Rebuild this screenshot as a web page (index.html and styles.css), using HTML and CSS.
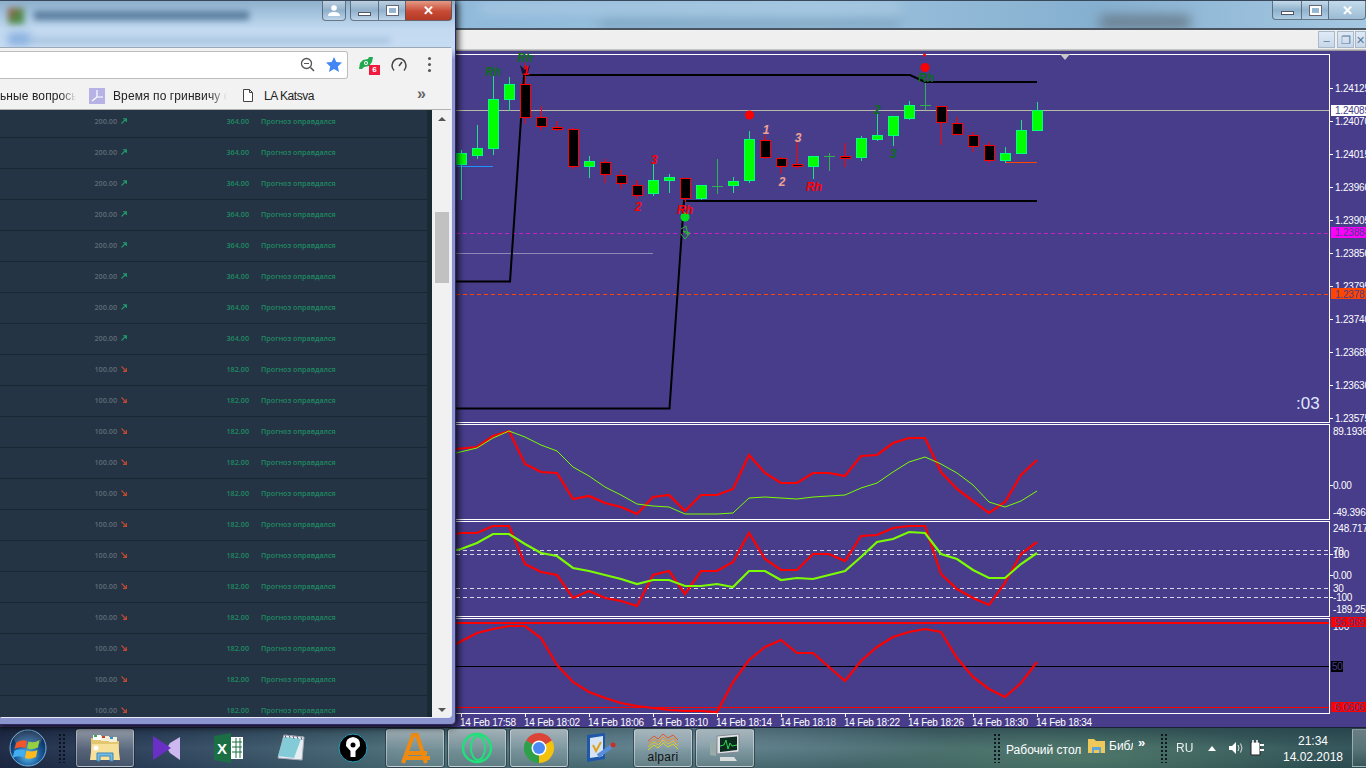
FILE: index.html
```html
<!DOCTYPE html>
<html lang="ru">
<head>
<meta charset="utf-8">
<title>Desktop</title>
<link rel="stylesheet" href="styles.css">
</head>
<body>
<svg class="defs" width="0" height="0">
  <symbol id="up" viewBox="0 0 6 6"><path d="M.5 5.5 5 1M2 .7h3.400v3.400" fill="none" stroke="currentColor" stroke-width="1.100"/></symbol>
  <symbol id="down" viewBox="0 0 6 6"><path d="M.5.5 5 5M5.400 2v3.400H2" fill="none" stroke="currentColor" stroke-width="1.100"/></symbol>
</svg>
<div class="desktop">
  <main class="mt-window">
    <header class="mt-title">
      <div class="blot blot-a"></div><div class="blot blot-b"></div><div class="blot blot-g"></div>
      <div class="caption-set caption-back">
        <span class="cap cap-min"><i></i></span><span class="cap cap-max"><i></i></span>
        <span class="cap cap-x">✕</span>
      </div>
    </header>
    <div class="mt-toolbar">
      <span class="mdi">–</span><span class="mdi">❐</span><span class="mdi">✕</span>
    </div>
    <svg class="chart" viewBox="0 53 1366 674" width="1366" height="674">
      <!-- frames -->
      <path class="frame" d="M0 54.500H1329.500V422.500H0M0 424.500H1329.500V519.500H0M0 521.500H1329.500V616.500H0M0 618.500H1329.500V713.500H0"/>
      <path class="frame" d="M1329.500 88.500h3M1329.500 121.500h3M1329.500 154.500h3M1329.500 187.500h3M1329.500 220.500h3M1329.500 253.500h3M1329.500 286.500h3M1329.500 319.500h3M1329.500 352.500h3M1329.500 385.500h3M1329.500 418.500h3M1329.500 485.500h3M1329.500 554.500h3M1329.500 575.500h3M1329.500 597.500h3M461.500 713v4M525.500 713v4M589.500 713v4M653.500 713v4M717.500 713v4M781.500 713v4M845.500 713v4M909.500 713v4M973.500 713v4M1037.500 713v4"/>
      <polygon class="tri" points="1060,54 1070,54 1065,60"/>
      <!-- price lines -->
      <path class="l-bid" d="M456 110.500H1329"/>
      <path class="l-mag" d="M456 233.500H1329"/>
      <path class="l-org" d="M456 294.500H1329"/>
      <path class="l-blue" d="M456 166.500H493"/>
      <path class="l-lil" d="M456 253.500H653"/>
      <path class="l-org2" d="M1006 162.500H1037"/>
      <path class="l-stair" d="M456 281.500H510L524 75H910L925 82H1037"/>
      <path class="l-stair" d="M456 408.500H669.500L684 201H1037"/>
      <!-- candles -->
      <path class="w-bull" d="M461.500 150V200M477.500 125V159M493.500 76V155M509.500 77V111M589.500 156V178M653.500 164V196M669.500 174V193M701.500 198V200M733.500 177V193M749.500 131V183M813.500 166V179M861.500 136V161M877.500 113V141M893.500 135V146M909.500 101V120M1005.500 147V163M1021.500 120V154M1037.500 102V131"/>
      <path class="w-doji" d="M717.500 159V194M712 186.500H723M829.500 153V171M824 156.500H835M925.500 83V110M920 105.500H931"/>
      <path class="w-bear" d="M525.500 63V124M541.500 106V130M557.500 121V131M573.500 128V169M605.500 159V183M621.500 170V189M637.500 180V199M685.500 178V202M765.500 135V159M781.500 157V174M797.500 142V169M845.500 143V167M941.500 106V145M957.500 117V135M973.500 132V152M989.500 142V163"/>
      <path class="b-bull" d="M456.500 153.500h10v11h-10zM472.500 148.500h10v7h-10zM488.500 99.500h10v49h-10zM504.500 84.500h10v15h-10zM584.500 161.500h10v5h-10zM648.500 180.500h10v13h-10zM664.500 177.500h10v3h-10zM696.500 185.500h10v13h-10zM728.500 181.500h10v4h-10zM744.500 139.500h10v41h-10zM808.500 156.500h10v10h-10zM856.500 138.500h10v19h-10zM872.500 135.500h10v4h-10zM888.500 116.500h10v19h-10zM904.500 105.500h10v13h-10zM1000.500 153.500h10v7h-10zM1016.500 130.500h10v23h-10zM1032.500 110.500h10v20h-10z"/>
      <path class="b-bear" d="M520.500 84.500h10v33h-10zM536.500 117.500h10v9h-10zM552.500 127.500h10v2h-10zM568.500 129.500h10v37h-10zM600.500 162.500h10v12h-10zM616.500 175.500h10v8h-10zM632.500 185.500h10v10h-10zM680.500 178.500h10v20h-10zM760.500 140.500h10v17h-10zM776.500 158.500h10v8h-10zM792.500 164.500h10v2h-10zM840.500 156.500h10v2h-10zM936.500 106.500h10v16h-10zM952.500 123.500h10v11h-10zM968.500 135.500h10v11h-10zM984.500 145.500h10v15h-10z"/>
      <!-- markers -->
      <text class="mk g" x="525" y="62">Rh</text>
      <path class="arrow-mark" d="M520 65 525 70 530 65 528 73 525 76 522 73Z"/>
      <circle class="dot-r" cx="749.500" cy="115" r="4.500"/>
      <circle class="dot-r" cx="925" cy="67.500" r="4.500"/>
      <circle class="dot-r small" cx="924.500" cy="55" r="1.500"/>
      <circle class="dot-g" cx="685" cy="217" r="4.500"/>
      <path class="scribble" d="M681 229 686 226 688 235 683 231 690 233 685 239 681 234"/>
      <text class="mk g" x="493" y="76">Rh</text>
      <text class="mk r" x="526" y="75">1</text>
      <text class="mk r" x="638" y="211">2</text>
      <text class="mk r" x="654" y="164">3</text>
      <text class="mk r" x="685" y="214">Rh</text>
      <text class="mk p" x="766" y="134">1</text>
      <text class="mk p" x="782" y="186">2</text>
      <text class="mk p" x="798" y="142">3</text>
      <text class="mk r" x="814" y="191">Rh</text>
      <text class="mk g" x="877" y="114">2</text>
      <text class="mk g" x="893" y="158">3</text>
      <text class="mk g" x="926" y="82">Rh</text>
      <text class="timer" x="1296" y="409">:03</text>
      <!-- indicators -->
      <polyline class="ln-r" points="456,449 477,447 493,436 509,431 525,464 541,472 557,473 573,499 589,496 605,503 621,507 637,514 653,497 669,495 685,511 701,495 717,495 733,489 749,455 765,473 781,483 797,483 813,473 829,473 845,476 861,456 877,455 893,443 909,438 925,438 941,472 957,489 973,501 989,513 1005,502 1021,475 1037,460"/>
      <polyline class="ln-g1" points="456,453 477,448 493,438 509,431 525,437 541,445 557,451 573,467 589,476 605,487 621,495 637,504 653,506 669,507 685,514 701,514 717,514 733,513 749,498 765,497 781,498 797,499 813,497 829,496 845,495 861,488 877,483 893,472 909,462 925,457 941,464 957,473 973,485 989,502 1005,507 1021,501 1037,491"/>
      <path class="l-dash" d="M456 550.500H1329M456 554.500H1329M456 588.500H1329M456 597.500H1329"/>
      <polyline class="ln-r" points="456,534 461,533 477,533 493,526 509,526 525,564 541,572 557,575 573,598 589,591 605,598 621,601 637,606 653,575 669,571 685,594 701,571 717,571 733,562 749,533 765,559 781,570 797,570 813,554 829,554 845,561 861,536 877,535 893,528 909,526 925,526 941,574 957,589 973,598 989,605 1005,583 1021,554 1037,542"/>
      <polyline class="ln-g2" points="456,550 461,549 477,543 493,534 509,534 525,544 541,553 557,556 573,568 589,571 605,575 621,579 637,584 653,580 669,580 685,586 701,586 717,584 733,587 749,571 765,571 781,580 797,578 813,579 829,575 845,571 861,557 877,542 893,539 909,532 925,533 941,554 957,559 973,570 989,578 1005,578 1021,564 1037,553"/>
      <path class="l-red2" d="M456 622.500H1329"/>
      <path class="l-red1" d="M456 707.500H1329"/>
      <path class="l-blk" d="M456 666.500H1329"/>
      <polyline class="ln-r" points="456,644 477,633 493,629 509,626 525,626 541,638 557,665 573,682 589,692 605,698 621,703 637,706 653,708 669,710 685,711 701,711 717,712 733,682 749,660 765,647 781,640 797,653 813,653 829,667 845,681 861,661 877,647 893,637 909,632 925,629 941,632 957,658 973,677 989,689 1005,697 1021,683 1037,662"/>
      <!-- axis boxes -->
      <rect class="box-w" x="1331" y="105" width="35" height="11"/>
      <rect class="box-m" x="1331" y="227" width="35" height="11"/>
      <text class="ax" x="1335" y="91.500">1.24125</text>
      <text class="ax on" x="1335" y="114">1.24089</text>
      <text class="ax" x="1335" y="124.500">1.24070</text>
      <text class="ax" x="1335" y="157.500">1.24015</text>
      <text class="ax" x="1335" y="190.500">1.23960</text>
      <text class="ax" x="1335" y="223.500">1.23905</text>
      <text class="ax on" x="1335" y="236">1.23884</text>
      <text class="ax" x="1335" y="257">1.23850</text>
      <text class="ax" x="1335" y="290">1.23795</text>
      <rect class="box-o" x="1331" y="288" width="35" height="11"/>
      <text class="ax on" x="1335" y="297.500">1.23782</text>
      <text class="ax" x="1335" y="323">1.23740</text>
      <text class="ax" x="1335" y="356">1.23685</text>
      <text class="ax" x="1335" y="389">1.23630</text>
      <text class="ax" x="1335" y="422">1.23575</text>
      <text class="ax" x="1333" y="435">89.1936</text>
      <text class="ax" x="1333" y="489">0.00</text>
      <text class="ax" x="1333" y="516">-49.3968</text>
      <text class="ax" x="1333" y="532">248.717</text>
      <text class="ax" x="1333" y="554.500">70</text>
      <text class="ax" x="1333" y="558">100</text>
      <text class="ax" x="1333" y="579">0.00</text>
      <text class="ax" x="1333" y="592">30</text>
      <text class="ax" x="1333" y="601">-100</text>
      <text class="ax" x="1333" y="613">-189.259</text>
      <text class="ax" x="1333" y="630">100</text>
      <rect class="box-r" x="1331" y="617" width="35" height="10"/>
      <text class="ax on" x="1335" y="626">96.9697</text>
      <rect class="box-k" x="1331" y="661" width="12" height="11"/>
      <text class="ax on" x="1332" y="670">50</text>
      <rect class="box-r" x="1331" y="702" width="35" height="10"/>
      <text class="ax on" x="1335" y="711">6.0606</text>
      <text class="ax tm" x="460" y="726">14 Feb 17:58</text>
      <text class="ax tm" x="524" y="726">14 Feb 18:02</text>
      <text class="ax tm" x="588" y="726">14 Feb 18:06</text>
      <text class="ax tm" x="652" y="726">14 Feb 18:10</text>
      <text class="ax tm" x="716" y="726">14 Feb 18:14</text>
      <text class="ax tm" x="780" y="726">14 Feb 18:18</text>
      <text class="ax tm" x="844" y="726">14 Feb 18:22</text>
      <text class="ax tm" x="908" y="726">14 Feb 18:26</text>
      <text class="ax tm" x="972" y="726">14 Feb 18:30</text>
      <text class="ax tm" x="1036" y="726">14 Feb 18:34</text>
    </svg>
  </main>

  <footer class="taskbar">
    <div class="orb">
      <svg width="38" height="38" viewBox="0 0 38 38">
        <defs>
          <radialGradient id="orbG" cx="50%" cy="70%" r="62%"><stop offset="0" stop-color="#62c4f0"/><stop offset=".55" stop-color="#1a5c9c"/><stop offset="1" stop-color="#0a2850"/></radialGradient>
        </defs>
        <circle cx="19" cy="19" r="18" fill="url(#orbG)" stroke="#79b4dc"/>
        <ellipse cx="19" cy="10" rx="14" ry="8" fill="#fff" opacity=".16"/>
        <path d="M7 14q5-4 11-2l-1.500 7q-6-2-11 1z" fill="#f0562a"/>
        <path d="M19.500 12.500q6 2 11-1.500l-1.500 7.500q-6 3-11 1z" fill="#96d040"/>
        <path d="M5.500 21.500q5-2 10.500-.500l-1.500 7q-6-2-11 1z" fill="#40aef0"/>
        <path d="M17.500 21.500q6 2 11-.500l-1.500 7q-6 3-11 1z" fill="#fcba1e"/>
      </svg>
    </div>
    <div class="grip"></div>
    <div class="tasks">
      <div class="task on">
        <svg width="32" height="32" viewBox="0 0 32 32"><path d="M2 6h12l2 3h14v19H2z" fill="#e2c670"/><path d="M4 3h8v5H4z" fill="#fff"/><path d="M5 3h3v2H5z" fill="#30b050"/><path d="M12 4h8v5h-8z" fill="#f5efd8"/><path d="M13 4h3v2h-3z" fill="#d04030"/><path d="M20 5h8v5h-8z" fill="#f5efd8"/><path d="M21 5h3v2h-3z" fill="#3090d8"/><path d="M3 12h26l2 16H1z" fill="#f6e09a"/><path d="M8 29V21h16v8h-3v-5H11v5z" fill="#72bce6" stroke="#3c86b8"/><circle cx="7" cy="16" r="2.500" fill="#fff"/></svg>
      </div>
      <div class="task">
        <svg width="30" height="26" viewBox="0 0 30 26"><path d="M28 2V25L18 18 15 13 18 8z" fill="#cdb8f0"/><path d="M1 1 19 13 1 25z" fill="#6a2fc4"/></svg>
      </div>
      <div class="task">
        <svg width="32" height="32" viewBox="0 0 32 32"><path d="M1 4 18 1v30L1 28z" fill="#1a7044"/><path d="M18 5h12v22H18z" fill="#fff"/><path d="M19 10h10M19 15h10M19 20h10M23 6v20M27 6v20" stroke="#1a7044"/><text class="xl" x="4" y="22">X</text></svg>
      </div>
      <div class="task">
        <svg width="34" height="32" viewBox="0 0 34 32"><path d="M10 3 30 5 28 28 4 26z" fill="#e6eef2" stroke="#aab"/><path d="M10 5 27 7 20 26 4 24z" fill="#84cbd8"/><path d="M11 3l1 3M15 3l1 3M19 4l1 3M23 4l1 3M27 5l1 3" stroke="#667"/></svg>
      </div>
      <div class="task">
        <svg width="30" height="30" viewBox="0 0 30 30"><circle cx="15" cy="15" r="14" fill="#000" stroke="#2a9fc0"/><path d="M15 4q-8 1-7 9l4.500 5v6h5v-6l4.500-5q1-8-7-9z" fill="#fff"/><circle cx="15" cy="12" r="2.500" fill="#000"/></svg>
      </div>
      <div class="task on">
        <svg width="32" height="32" viewBox="0 0 32 32"><path d="M4 31 14 3H18L27 31M8 21H28M7 26H31" fill="none" stroke="#ef8a10" stroke-width="4"/></svg>
      </div>
      <div class="task on">
        <svg width="32" height="32" viewBox="0 0 32 32"><circle cx="16" cy="16" r="14" fill="none" stroke="#1fe07a" stroke-width="2.500"/><ellipse cx="17" cy="16" rx="7" ry="12" fill="none" stroke="#1fe07a" stroke-width="2"/></svg>
      </div>
      <div class="task on">
        <svg width="32" height="32" viewBox="0 0 32 32"><path d="M16 16 3 8.500A15 15 0 0 1 29 8.500Z" fill="#db4437"/><path d="M16 16 29 8.500A15 15 0 0 1 16 31Z" fill="#f4c20d"/><path d="M16 16 16 31A15 15 0 0 1 3 8.500Z" fill="#2ea04a"/><circle cx="16" cy="16" r="7.500" fill="#fff"/><circle cx="16" cy="16" r="6" fill="#4a8af4"/></svg>
      </div>
      <div class="task">
        <svg width="32" height="32" viewBox="0 0 32 32"><path d="M2 3 20 1V27L2 30z" fill="#1f58a8"/><path d="M5 6 18 4V24L5 26z" fill="#d4e4f6"/><path d="M8 13l3 6 5-9" fill="none" stroke="#e0a020" stroke-width="2"/><path d="M13 24 27 14" stroke="#5a8ed8" stroke-width="4"/><circle cx="28" cy="13" r="2.500" fill="#c83020"/></svg>
      </div>
      <div class="task on task-alpari">
        <svg width="32" height="18" viewBox="0 0 32 18"><path d="M1 8 7 3l4 3 5-5 5 4 5-3 5 5" fill="none" stroke="#e0552a"/><path d="M1 11 7 6l4 3 5-5 5 4 5-3 5 5" fill="none" stroke="#ee8c24"/><path d="M1 14l6-5 4 3 5-5 5 4 5-3 5 5" fill="none" stroke="#ecbc20"/><path d="M1 17l6-5 4 3 5-5 5 4 5-3 5 5" fill="none" stroke="#dcd420"/></svg>
        <span class="alpari">alpari</span>
      </div>
      <div class="task on">
        <svg width="34" height="30" viewBox="0 0 34 30"><path d="M9 3 31 1v18L9 21z" fill="#e0e4e4" stroke="#889"/><path d="M12 5 29 3.500V17L12 19z" fill="#0d2a1e"/><path d="M12 13l4-1 2-5 2 9 2-6 2 3 5-1" fill="none" stroke="#30d050"/><path d="M2 9l6-1v15l-6-1z" fill="#9aa"/><path d="M12 24h14l3 4H12z" fill="#d8dcdc"/></svg>
      </div>
    </div>
    <div class="tray">
      <div class="grip"></div>
      <span class="tb-label">Рабочий стол</span>
      <svg class="tb-folder" width="17" height="15" viewBox="0 0 17 15"><path d="M0 1h6l2 2h9v12H0z" fill="#eec95a"/><path d="M4 15V9h9v6h-2v-3H6v3z" fill="#5ba6d6"/></svg>
      <span class="tb-lib">Библ</span>
      <span class="tb-more">»</span>
      <div class="grip"></div>
      <span class="lang">RU</span>
      <span class="tray-up"></span>
      <svg class="tray-ic" width="16" height="14" viewBox="0 0 16 14"><path d="M1 5h3l4-4v12L4 9H1z" fill="#fff"/><path d="M10 4q2 3 0 6M12.500 2.500q3 4.500 0 9" fill="none" stroke="#fff" opacity=".8"/></svg>
      <svg class="tray-ic plug" width="15" height="18" viewBox="0 0 15 18"><path d="M1 3h9v13H1z" fill="#fff" stroke="#222"/><path d="M3 1v4M7 1v4" stroke="#fff" stroke-width="1.500"/><path d="M10 6h4M10 11h4" stroke="#fff" stroke-width="2"/></svg>
      <div class="clock"><span>21:34</span><span>14.02.2018</span></div>
      <div class="show-desktop"></div>
    </div>
  </footer>

  <section class="browser">
    <header class="br-head">
      <div class="blot blot-c"></div><div class="blot blot-d"></div><div class="blot blot-e"></div><div class="blot blot-f"></div>
      <div class="caption-set">
        <span class="cap cap-user"><svg width="12" height="11" viewBox="0 0 12 11"><circle cx="6" cy="3" r="2.800" fill="#fff"/><path d="M0 11q0-4 6-4t6 4z" fill="#fff"/></svg></span>
        <span class="cap cap-min"><i></i></span><span class="cap cap-max"><i></i></span>
        <span class="cap cap-x red">✕</span>
      </div>
    </header>
    <div class="br-inner">
      <div class="br-toolbar">
        <div class="omnibox">
          <svg width="15" height="15" viewBox="0 0 15 15"><circle cx="6.500" cy="6.500" r="5" fill="none" stroke="#555" stroke-width="1.300"/><path d="M10.500 10.500 14 14" stroke="#555" stroke-width="1.600"/><path d="M4 6.500h5" stroke="#555"/></svg>
          <svg width="16" height="15" viewBox="0 0 16 15"><path d="M8 0l2.300 5 5.700.6-4.200 3.800L13 15 8 12.100 3 15l1.200-5.600L0 5.600 5.700 5z" fill="#4285f4"/></svg>
        </div>
        <div class="ext">
          <svg width="16" height="15" viewBox="0 0 16 15"><path d="M1 13 2 7l3-3 5-1 1-2h4l-1 5-3 4-5 1-2 2z" fill="#1fa850"/><circle cx="8" cy="7" r="2" fill="#fff"/><circle cx="8" cy="7" r="1" fill="#1fa850"/></svg>
          <span class="badge">6</span>
        </div>
        <svg class="speed" width="16" height="16" viewBox="0 0 16 16"><path d="M3 13.500a7 7 0 1 1 10 0" fill="none" stroke="#444" stroke-width="1.500"/><path d="M8 9 11 5" stroke="#444" stroke-width="1.500"/></svg>
        <div class="dots"><i></i><i></i><i></i></div>
      </div>
      <nav class="br-marks">
        <span class="mark fade-a">ьные вопросы</span>
        <span class="mark-ic"><svg width="16" height="16" viewBox="0 0 16 16"><path d="M0 0h16v16H0z" fill="#b6b2e6"/><path d="M8 2v7L3 13M8 9h6" fill="none" stroke="#fff" stroke-width="1.200"/></svg></span>
        <span class="mark fade-b">Время по гринвичу с</span>
        <svg class="mark-file" width="10" height="13" viewBox="0 0 10 13"><path d="M.5.500h6l3 3v9H.500zM6.500.500v3h3" fill="#fff" stroke="#444"/></svg>
        <span class="mark mark-la">LA Katsva</span>
        <span class="mark-more">»</span>
      </nav>
      <div class="br-page">
        <div class="table">
          <div class="row up"><span class="v">200.00</span><svg class="ar"><use href="#up"/></svg><span class="m">364.00</span><span class="s">Прогноз оправдался</span></div>
          <div class="row up"><span class="v">200.00</span><svg class="ar"><use href="#up"/></svg><span class="m">364.00</span><span class="s">Прогноз оправдался</span></div>
          <div class="row up"><span class="v">200.00</span><svg class="ar"><use href="#up"/></svg><span class="m">364.00</span><span class="s">Прогноз оправдался</span></div>
          <div class="row up"><span class="v">200.00</span><svg class="ar"><use href="#up"/></svg><span class="m">364.00</span><span class="s">Прогноз оправдался</span></div>
          <div class="row up"><span class="v">200.00</span><svg class="ar"><use href="#up"/></svg><span class="m">364.00</span><span class="s">Прогноз оправдался</span></div>
          <div class="row up"><span class="v">200.00</span><svg class="ar"><use href="#up"/></svg><span class="m">364.00</span><span class="s">Прогноз оправдался</span></div>
          <div class="row up"><span class="v">200.00</span><svg class="ar"><use href="#up"/></svg><span class="m">364.00</span><span class="s">Прогноз оправдался</span></div>
          <div class="row up"><span class="v">200.00</span><svg class="ar"><use href="#up"/></svg><span class="m">364.00</span><span class="s">Прогноз оправдался</span></div>
          <div class="row dn"><span class="v">100.00</span><svg class="ar"><use href="#down"/></svg><span class="m">182.00</span><span class="s">Прогноз оправдался</span></div>
          <div class="row dn"><span class="v">100.00</span><svg class="ar"><use href="#down"/></svg><span class="m">182.00</span><span class="s">Прогноз оправдался</span></div>
          <div class="row dn"><span class="v">100.00</span><svg class="ar"><use href="#down"/></svg><span class="m">182.00</span><span class="s">Прогноз оправдался</span></div>
          <div class="row dn"><span class="v">100.00</span><svg class="ar"><use href="#down"/></svg><span class="m">182.00</span><span class="s">Прогноз оправдался</span></div>
          <div class="row dn"><span class="v">100.00</span><svg class="ar"><use href="#down"/></svg><span class="m">182.00</span><span class="s">Прогноз оправдался</span></div>
          <div class="row dn"><span class="v">100.00</span><svg class="ar"><use href="#down"/></svg><span class="m">182.00</span><span class="s">Прогноз оправдался</span></div>
          <div class="row dn"><span class="v">100.00</span><svg class="ar"><use href="#down"/></svg><span class="m">182.00</span><span class="s">Прогноз оправдался</span></div>
          <div class="row dn"><span class="v">100.00</span><svg class="ar"><use href="#down"/></svg><span class="m">182.00</span><span class="s">Прогноз оправдался</span></div>
          <div class="row dn"><span class="v">100.00</span><svg class="ar"><use href="#down"/></svg><span class="m">182.00</span><span class="s">Прогноз оправдался</span></div>
          <div class="row dn"><span class="v">100.00</span><svg class="ar"><use href="#down"/></svg><span class="m">182.00</span><span class="s">Прогноз оправдался</span></div>
          <div class="row dn"><span class="v">100.00</span><svg class="ar"><use href="#down"/></svg><span class="m">182.00</span><span class="s">Прогноз оправдался</span></div>
          <div class="row dn"><span class="v">100.00</span><svg class="ar"><use href="#down"/></svg><span class="m">182.00</span><span class="s">Прогноз оправдался</span></div>
        </div>
        <div class="gutter"></div>
        <div class="scrollbar">
          <span class="sb-up"></span>
          <span class="sb-thumb"></span>
          <span class="sb-down"></span>
        </div>
      </div>
    </div>
  </section>
</div>
</body>
</html>
```
FILE: styles.css
```css
* { box-sizing: border-box; }
html, body { margin: 0; padding: 0; width: 1366px; height: 768px; overflow: hidden; background: #222; }
body { font-family: "Liberation Sans", Arial, sans-serif; }
.defs { position: absolute; }
.desktop { position: relative; width: 1366px; height: 768px; display: flex; flex-direction: column; overflow: hidden; }

/* back window */
.mt-window { width: 1366px; height: 727px; display: flex; flex-direction: column; flex: none; }
.mt-title { position: relative; height: 30px; overflow: hidden; flex: none; display: flex; justify-content: flex-end;
  border-top: 1px solid #39485a; border-bottom: 2px solid #4a5560;
  background: linear-gradient(90deg, #a6c8e2 0, #8fb9da 30%, #9cc2de 60%, #86b0d0 80%, #a5c8e2 100%); }
.blot { position: absolute; filter: blur(6px); }
.blot-a { left: 1100px; top: 14px; width: 90px; height: 14px; background: #6a7f90; }
.blot-b { left: 600px; top: 18px; width: 300px; height: 10px; background: #7fa6c2; }
.blot-g { left: 480px; top: 4px; width: 420px; height: 6px; background: #b4d0e6; }
.caption-set { position: relative; display: flex; align-items: stretch; height: 20px; margin-right: 3px; }
.caption-back { margin-right: 0; height: 19px; }
.cap { display: flex; align-items: center; justify-content: center; border: 1px solid rgba(70,85,100,.75); border-top: 0;
  background: linear-gradient(180deg, rgba(255,255,255,.4), rgba(120,150,175,.35) 50%, rgba(255,255,255,.18)); color: #fff; }
.cap i { display: block; }
.cap-user { width: 24px; border-radius: 0 0 4px 4px; margin-right: 4px; }
.cap-min { width: 28px; border-radius: 0 0 0 4px; border-right: 0; }
.cap-min i { width: 13px; height: 4px; background: #fff; border: 1px solid #556; margin-top: 6px; }
.cap-max { width: 27px; border-right: 0; }
.cap-max i { width: 11px; height: 9px; border: 2px solid #fff; outline: 1px solid #667; }
.cap-x { width: 47px; border-radius: 0 0 4px 0; font-size: 13px; font-weight: 700; }
.caption-back .cap-min { width: 29px; }
.caption-back .cap-x { width: 38px; background: linear-gradient(180deg, rgba(255,255,255,.35), rgba(140,165,185,.3)); }
.cap-x.red { background: linear-gradient(180deg, #e49a86, #c84a34 55%, #b23a26); }
.mt-toolbar { height: 23px; flex: none; display: flex; justify-content: flex-end; padding-top: 1px;
  background: linear-gradient(180deg, #f0f0f0 0, #eee 19px, #9a9a9a 20px, #9a9a9a 21px, #483d8b 21px); }
.mdi { width: 17px; height: 17px; margin-right: 2px; font-size: 11px; line-height: 16px; text-align: center; color: #5a7a9a;
  background: linear-gradient(180deg, #dfeaf6, #c8d8ea); border: 1px solid #a9b9c9; flex: none; }
.mdi:nth-child(2) { margin-right: 1px; }
.mdi:last-child { width: 11px; margin-right: 0; overflow: hidden; }

/* chart */
.chart { display: block; background: #483d8b; flex: none; }
.chart path, .chart polyline { fill: none; shape-rendering: crispEdges; }
.chart polyline, .l-stair { shape-rendering: auto !important; }
.frame { stroke: #fff; stroke-width: 1; }
.tri { fill: #c8c8c8; }
.l-bid { stroke: #b8b8a8; }
.l-mag { stroke: #c623c6; stroke-dasharray: 4 3; }
.l-org { stroke: #ff4500; stroke-dasharray: 4 3; }
.l-blue { stroke: #1e90ff; }
.l-lil { stroke: #8f86b4; }
.l-org2 { stroke: #ff4500; }
.l-stair { stroke: #000; stroke-width: 2; }
.w-bull { stroke: #1fe08a; }
.w-doji { stroke: #2db04e; }
.w-bear { stroke: #ff0000; }
.chart .b-bull { fill: #00ff00; stroke: #00ff7f; }
.chart .b-bear { fill: #000; stroke: #ff0000; }
.chart .arrow-mark { fill: #111133; shape-rendering: auto; }
.dot-r { fill: #ff0000; }
.dot-g { fill: #00e020; }
.chart .scribble { stroke: #28c030; stroke-width: 1; shape-rendering: auto; }
.mk { font: italic 700 12px "Liberation Sans", Arial, sans-serif; text-anchor: middle; }
.mk.g { fill: #0a6e1a; }
.mk.r { fill: #ff0000; }
.mk.p { fill: #f0a090; }
.timer { font: 17px "Liberation Sans", Arial, sans-serif; fill: #dfe6ff; }
.ln-r { stroke: #ff0000; stroke-width: 2.200; }
.ln-g1 { stroke: #7cfc00; stroke-width: 1; }
.ln-g2 { stroke: #7cfc00; stroke-width: 2.200; }
.l-dash { stroke: #d8d8e8; stroke-dasharray: 4 3; }
.l-red2 { stroke: #ff0000; stroke-width: 2; }
.l-red1 { stroke: #ff0000; }
.l-blk { stroke: #000; }
.box-w { fill: #fff; }
.box-m { fill: #ff00ff; }
.box-o { fill: #ff4500; }
.box-r { fill: #ff0000; }
.box-k { fill: #000; }
.ax { font: 10px "Liberation Sans", Arial, sans-serif; fill: #fff; letter-spacing: -.2px; }
.ax.tm { letter-spacing: -.25px; }
.ax.on { fill: #483d8b; }

/* taskbar */
.taskbar { height: 41px; flex: none; display: flex; align-items: center; position: relative;
  border-top: 1px solid #1a2233;
  background:
    radial-gradient(ellipse 260px 30px at 690px 14px, rgba(150,175,200,.35), transparent),
    radial-gradient(ellipse 240px 30px at 1080px 30px, rgba(95,140,115,.45), transparent),
    linear-gradient(180deg, rgba(20,30,50,.25), rgba(255,255,255,.04) 50%, rgba(0,0,0,.06)),
    linear-gradient(90deg, #1b2743 0, #2a3f5a 140px, #4a6f78 420px, #466a70 800px, #3c635f 1100px, #2d5055 1366px); }
.orb { width: 54px; flex: none; display: flex; justify-content: center; padding-left: 1px; }
.grip { width: 8px; height: 30px; flex: none; margin: 0 0 0 4px;
  background: radial-gradient(circle, rgba(10,15,25,.9) 1px, transparent 1.3px) 0 0 / 4px 4px; }
.tasks { display: flex; gap: 4px; margin-left: 10px; }
.task { width: 58px; height: 38px; display: flex; flex-direction: column; align-items: center; justify-content: center; flex: none; border: 1px solid transparent; border-radius: 3px; }
.task.on { border-color: rgba(255,255,255,.4);
  background: linear-gradient(180deg, rgba(255,255,255,.5) 0, rgba(255,255,255,.2) 55%, rgba(255,255,255,.14) 100%); box-shadow: 0 0 0 1px rgba(20,30,40,.5); }
.xl { font: 700 15px "Liberation Sans", Arial, sans-serif; fill: #fff; }
.task-alpari { justify-content: flex-start; padding-top: 3px; }
.alpari { font: 12px/12px "Liberation Sans", Arial, sans-serif; color: #111; letter-spacing: .3px; }
.tray { flex: 1; margin-left: 235px; display: flex; align-items: center; color: #fff; font-size: 12px; height: 38px; }
.tb-label { margin-left: 5px; width: 80px; font-size: 12px; white-space: nowrap; position: relative; top: 2px; }
.tb-folder { margin-left: 2px; position: relative; top: -3px; }
.tb-lib { margin-left: 4px; width: 24px; overflow: hidden; white-space: nowrap; position: relative; top: -2px; }
.tb-more { margin-left: 5px; width: 18px; font-weight: 700; font-size: 13px; position: relative; top: -6px; }
.lang { margin-left: 8px; width: 26px; opacity: .9; }
.tray-up { width: 0; height: 0; margin-left: 6px; border: 4px solid transparent; border-top: 0; border-bottom: 5px solid #fff; }
.tray-ic { margin-left: 12px; flex: none; }
.tray-ic.plug { margin-left: 6px; }
.clock { position: absolute; left: 1283px; top: 7px; width: 60px; display: flex; flex-direction: column; align-items: center; gap: 4px; font-size: 12px; line-height: 12px; white-space: nowrap; }
.show-desktop { width: 14px; height: 38px; margin-left: auto; border: 1px solid rgba(255,255,255,.4); border-right: 0;
  background: linear-gradient(180deg, rgba(255,255,255,.3), rgba(255,255,255,.05)); }

/* browser */
.browser { position: absolute; left: 0; top: 0; width: 456px; height: 725px; display: flex; flex-direction: column;
  background: linear-gradient(180deg, #c4dcf2 0, #c4dcf2 48px, #8b94cf 60px, #8b94cf 100%);
  border-right: 1px solid #2c2c5c; border-bottom: 1px solid #2c2c5c; box-shadow: 0 0 7px 2px rgba(0,0,0,.85); border-radius: 0 5px 5px 0; }
.br-head { position: relative; height: 47px; flex: none; overflow: hidden; display: flex; justify-content: flex-end; align-items: flex-start;
  background: linear-gradient(180deg, #8fb0cc 0, #a4c4de 28%, #c2d9f0 60%, #c6dcf2 100%); border-top: 1px solid #39485a; }
.blot-c { left: 8px; top: 7px; width: 16px; height: 16px; background: linear-gradient(135deg, #a8503c, #4e8c4a 60%); filter: blur(3px); }
.blot-d { left: 34px; top: 10px; width: 215px; height: 9px; background: #5a7d9e; filter: blur(3px); }
.blot-e { left: 30px; top: 37px; width: 360px; height: 5px; background: #a3c0dc; filter: blur(3px); }
.blot-f { left: 8px; top: 32px; width: 22px; height: 12px; background: #86aede; filter: blur(4px); }
.br-inner { flex: 1; min-height: 0; margin: 0 4px 7px 0; display: flex; flex-direction: column; background: #f2f2f2; border-radius: 0 0 4px 0; overflow: hidden; box-shadow: 1px 1px 0 #e8ecf8; }
.br-toolbar { height: 35px; flex: none; display: flex; align-items: center; background: #f2f2f2; border-top: 1px solid #9aa8b8; padding-bottom: 1px; }
.omnibox { width: 348px; height: 28px; flex: none; display: flex; align-items: center; justify-content: flex-end; gap: 11px; padding-right: 5px;
  background: #fff; border: 1px solid #bdbdbd; border-left: 0; border-radius: 0 3px 3px 0; }
.ext { position: relative; margin-left: 10px; width: 20px; height: 18px; flex: none; }
.badge { position: absolute; left: 11px; top: 9px; width: 11px; height: 10px; background: #f01a3e; color: #fff; font: 700 8px/10px "Liberation Sans", Arial, sans-serif; text-align: center; }
.speed { margin-left: 13px; flex: none; }
.dots { margin-left: 21px; display: flex; flex-direction: column; gap: 3px; flex: none; }
.dots i { display: block; width: 3px; height: 3px; border-radius: 50%; background: #555; }
.br-marks { height: 28px; flex: none; position: relative; display: flex; align-items: center; background: #f2f2f2; border-bottom: 1px solid #b2b2b2; font-size: 12px; color: #222; white-space: nowrap; }
.mark { display: block; letter-spacing: .1px; }
.mark-la { letter-spacing: -.45px; }
.fade-a { width: 76px; overflow: hidden; -webkit-mask-image: linear-gradient(90deg, #000 80%, transparent); mask-image: linear-gradient(90deg, #000 80%, transparent); }
.mark-ic { margin-left: 13px; width: 16px; height: 16px; flex: none; }
.mark-ic svg { display: block; }
.fade-b { margin-left: 8px; width: 114px; overflow: hidden; -webkit-mask-image: linear-gradient(90deg, #000 85%, transparent); mask-image: linear-gradient(90deg, #000 85%, transparent); }
.mark-file { margin-left: 16px; flex: none; }
.mark-more { position: absolute; left: 417px; top: 3px; font-size: 16px; color: #666; font-weight: 700; }
.mark-file + .mark { margin-left: 11px; }
.br-page { flex: 1; min-height: 0; display: flex; background: #f1f1f1; overflow: hidden; }
.table { width: 427px; flex: none; overflow: hidden; background: #243444; }
.row { height: 31px; display: grid; grid-template-columns: 117px 10px 122px 1fr; align-items: center; padding-bottom: 2px;
  border-bottom: 1px solid #1a2632; font: 600 7.200px "Open Sans", "Liberation Sans", sans-serif; white-space: nowrap; }
.row:first-child { margin-top: -3px; }
.v { text-align: right; color: #5f6b76; }
.ar { width: 6px; height: 6px; justify-self: end; }
.up .ar { color: #1f9a6a; }
.dn .ar { color: #c4492f; }
.m { text-align: right; color: #1f8a62; }
.s { padding-left: 12px; color: #1f8a62; }
.gutter { width: 5px; flex: none; background: #1a2a33; }
.scrollbar { width: 19px; flex: none; display: flex; flex-direction: column; align-items: center; background: #f1f1f1; position: relative; }
.sb-up { margin-top: 7px; width: 0; height: 0; border: 4px solid transparent; border-top: 0; border-bottom: 4px solid #555; }
.sb-thumb { margin-top: 91px; width: 14px; height: 71px; background: #c1c1c1; flex: none; }
.sb-down { margin-top: auto; margin-bottom: 5px; width: 0; height: 0; border: 4px solid transparent; border-bottom: 0; border-top: 4px solid #555; }
```
